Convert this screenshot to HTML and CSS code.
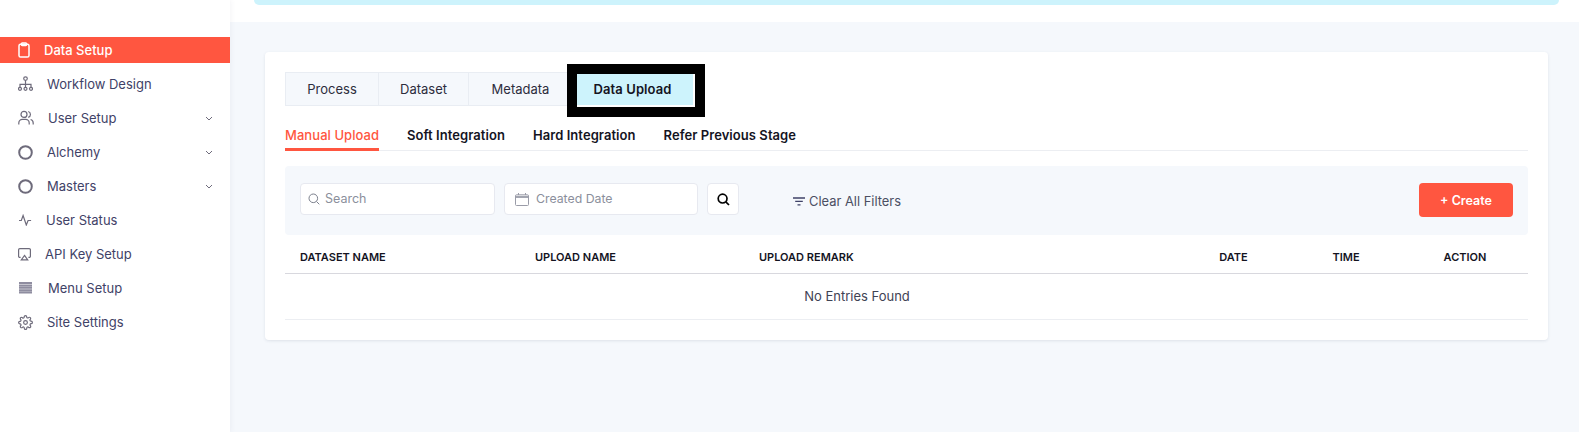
FILE: index.html
```html
<!DOCTYPE html>
<html>
<head>
  <title>Data Setup</title>
  <link rel="stylesheet" href="styles.css">
</head>
<body>
  <div class="app">
    <aside class="sidebar">
      <nav class="menu">
        <a class="menu-item active">
          <svg class="ico" width="12" height="16" viewBox="0 0 12 16"><rect x="1" y="2.2" width="10" height="12.8" rx="1.6"/><rect x="3.4" y="1" width="5.2" height="2.4" rx=".8"/></svg>
          <span>Data Setup</span>
        </a>
        <a class="menu-item">
          <svg class="ico" width="15" height="16" viewBox="0 0 15 16"><circle cx="7.5" cy="2.6" r="1.8"/><path d="M7.5 4.4V11M2 11V8.3h11V11"/><circle cx="2" cy="12.8" r="1.5"/><circle cx="7.5" cy="12.8" r="1.5"/><circle cx="13" cy="12.8" r="1.5"/></svg>
          <span>Workflow Design</span>
        </a>
        <a class="menu-item">
          <svg class="ico" width="16" height="16" viewBox="0 0 16 16"><circle cx="6" cy="4.4" r="3"/><path d="M.8 14.5v-1.6a3.6 3.6 0 0 1 3.6-3.6h3.2a3.6 3.6 0 0 1 3.6 3.6v1.6M10.2 1.5a3 3 0 0 1 0 5.8M12.6 9.5a3.5 3.5 0 0 1 2.6 3.4v1.6"/></svg>
          <span>User Setup</span>
          <svg class="chev" width="8" height="5" viewBox="0 0 8 5"><path d="M1 1l3 3 3-3"/></svg>
        </a>
        <a class="menu-item">
          <svg class="ico ring" width="15" height="15" viewBox="0 0 15 15"><circle cx="7.5" cy="7.5" r="6.3"/></svg>
          <span>Alchemy</span>
          <svg class="chev" width="8" height="5" viewBox="0 0 8 5"><path d="M1 1l3 3 3-3"/></svg>
        </a>
        <a class="menu-item">
          <svg class="ico ring" width="15" height="15" viewBox="0 0 15 15"><circle cx="7.5" cy="7.5" r="6.3"/></svg>
          <span>Masters</span>
          <svg class="chev" width="8" height="5" viewBox="0 0 8 5"><path d="M1 1l3 3 3-3"/></svg>
        </a>
        <a class="menu-item">
          <svg class="ico" width="14" height="12" viewBox="0 0 14 12"><path d="M1 6.5h2.3l1.8-5 3.2 9.5 1.8-4.5h3"/></svg>
          <span>User Status</span>
        </a>
        <a class="menu-item">
          <svg class="ico" width="13" height="13" viewBox="0 0 13 13"><path d="M2.6 9.4H1.8A1.2 1.2 0 0 1 .6 8.2V1.8A1.2 1.2 0 0 1 1.8.6h9.4a1.2 1.2 0 0 1 1.2 1.2v6.4a1.2 1.2 0 0 1-1.2 1.2h-.8M6.5 7.4l3.2 4.4H3.3z"/></svg>
          <span>API Key Setup</span>
        </a>
        <a class="menu-item">
          <svg class="ico bars" width="13" height="12" viewBox="0 0 13 12"><path d="M0 1h13M0 3.4h13M0 5.8h13M0 8.2h13M0 10.6h13"/></svg>
          <span>Menu Setup</span>
        </a>
        <a class="menu-item">
          <svg class="ico gear" width="15" height="15" viewBox="0 0 24 24"><circle cx="12" cy="12" r="3"/><path d="M19.4 15a1.65 1.65 0 0 0 .33 1.82l.06.06a2 2 0 1 1-2.83 2.83l-.06-.06a1.65 1.65 0 0 0-2.82 1.17V21a2 2 0 1 1-4 0v-.09A1.65 1.65 0 0 0 7.2 19.7l-.06.06a2 2 0 1 1-2.83-2.83l.06-.06a1.65 1.65 0 0 0-1.17-2.82H3a2 2 0 1 1 0-4h.09A1.65 1.65 0 0 0 4.3 7.2l-.06-.06a2 2 0 1 1 2.83-2.83l.06.06a1.65 1.65 0 0 0 2.82-1.17V3a2 2 0 1 1 4 0v.09a1.65 1.65 0 0 0 2.82 1.17l.06-.06a2 2 0 1 1 2.83 2.83l-.06.06a1.65 1.65 0 0 0 1.17 2.82H21a2 2 0 1 1 0 4h-.09a1.65 1.65 0 0 0-1.51 1z"/></svg>
          <span>Site Settings</span>
        </a>
      </nav>
    </aside>

    <main class="main">
      <div class="topbar"><div class="banner"></div></div>

      <div class="content">
        <section class="card">
          <div class="tabs">
            <div class="tab">Process</div>
            <div class="tab">Dataset</div>
            <div class="tab">Metadata</div>
            <div class="tab current">Data Upload</div>
          </div>

          <div class="subtabs">
            <a class="subtab active">Manual Upload</a>
            <a class="subtab">Soft Integration</a>
            <a class="subtab">Hard Integration</a>
            <a class="subtab">Refer Previous Stage</a>
          </div>

          <div class="filters">
            <div class="field search-field">
              <svg class="field-ico" width="12" height="12" viewBox="0 0 12 12"><circle cx="5.3" cy="5.3" r="4.3"/><path d="M8.5 8.5l2.8 2.8"/></svg>
              <span>Search</span>
            </div>
            <div class="field date-field">
              <svg class="field-cal" width="14" height="13" viewBox="0 0 14 13"><rect x=".5" y="1.8" width="13" height="10.7" rx="1"/><path d="M.5 3.4h13M.5 4.4h13"/><path d="M3.5 0v2M10.5 0v2"/></svg>
              <span>Created Date</span>
            </div>
            <button class="search-btn">
              <svg width="13" height="13" viewBox="0 0 13 13"><circle cx="5.6" cy="5.6" r="4.4"/><path d="M8.8 8.8l3.2 3.2"/></svg>
            </button>
            <a class="clear">
              <svg width="12" height="9" viewBox="0 0 12 9"><path d="M0 1h12M2.2 4.4h7.6M4.5 7.8h3"/></svg>
              Clear All Filters
            </a>
            <button class="create">+ Create</button>
          </div>

          <table class="grid">
            <thead>
              <tr>
                <th class="col-name">DATASET NAME</th>
                <th class="col-upload">UPLOAD NAME</th>
                <th class="col-remark">UPLOAD REMARK</th>
                <th class="col-date mid">DATE</th>
                <th class="col-time mid">TIME</th>
                <th class="col-action mid">ACTION</th>
              </tr>
            </thead>
            <tbody>
              <tr><td class="empty" colspan="6">No Entries Found</td></tr>
            </tbody>
          </table>
        </section>
      </div>
    </main>
  </div>
</body>
</html>
```

FILE: styles.css
```css
* { box-sizing: border-box; }
html, body { height: 100%; }
body { margin: 0; overflow: hidden; font-family: Inter, "Liberation Sans", sans-serif; font-size: 13px; color: #3f4254; background: #f5f8fc; }
svg { display: block; fill: none; flex: none; }

.app { display: flex; height: 432px; }

/* sidebar */
.sidebar { width: 230px; flex: none; background: #fff; padding-top: 37px; box-shadow: 0 0 6px rgba(60, 70, 100, 0.08); position: relative; }
.menu { display: flex; flex-direction: column; gap: 8px; }
.menu-item { display: flex; align-items: center; gap: 14px; height: 26px; padding: 0 17px 0 18px; color: #3f4267; }
.menu-item span { flex: 1; }
.menu-item.active { background: #ff5640; color: #fff; font-weight: 500; }
.ico { stroke: #6e6b7b; stroke-width: 1.2; }
.active .ico { stroke: #fff; stroke-width: 1.5; }
.ring { stroke-width: 2; }
.bars { margin: 0 2px 0 1px; stroke: #8f8da0; stroke-width: 2; }
.gear { stroke-width: 1.9; }
.chev { stroke: #6e6b7b; stroke-width: 1; }

/* top */
.main { flex: 1; min-width: 0; display: flex; flex-direction: column; }
.topbar { height: 22px; flex: none; background: #fff; padding: 0 20px 0 24px; }
.banner { height: 5px; background: #cdf3fc; border-radius: 0 0 8px 8px; }
.content { flex: 1; padding: 30px 31px 0 35px; }

/* card */
.card { height: 288px; background: #fff; border-radius: 4px; padding: 20px 20px 0; box-shadow: 0 1px 3px rgba(60, 70, 100, 0.12); }

.tabs { display: flex; height: 34px; }
.tab { display: flex; align-items: center; justify-content: center; background: #f5f8fc; border: 1px solid #e9edf3; border-left-width: 0; color: #2d2d3c; }
.tab:nth-child(1) { width: 94px; border-left-width: 1px; }
.tab:nth-child(2) { width: 90px; }
.tab:nth-child(3) { width: 98px; padding-left: 5px; border-right: 0; }
.tab.current { width: 118px; height: 33px; margin: 2px 0 0 10px; padding: 0 5px 2px 0; background: #cdf3fc; border: 0; border-right: 2px solid #fff; border-bottom: 2px solid #fff; font-weight: 600; letter-spacing: 0.1px; color: #14141f; outline: 10px solid #000; }

.subtabs { display: flex; gap: 28px; height: 45px; border-bottom: 1px solid #eceef2; }
.subtab { height: 45px; padding-top: 21px; color: #14141f; font-weight: 600; letter-spacing: 0.06px; }
.subtab.active { width: 94px; color: #ff5640; font-weight: 500; white-space: nowrap; border-bottom: 3px solid #ff5640; }

.filters { display: flex; align-items: flex-start; height: 69px; margin-top: 15px; padding: 17px 15px; background: #f5f8fc; border-radius: 4px; }
.field { display: flex; align-items: center; height: 32px; background: #fff; border: 1px solid #e7e9f0; border-radius: 4px; color: #8b8f9c; font-size: 12.5px; }
.search-field { width: 195px; padding-left: 7px; gap: 5px; }
.date-field { width: 194px; margin-left: 9px; padding-left: 10px; gap: 7px; }
.field span { padding-bottom: 1px; }
.date-field span { font-size: 12.3px; }
.field-ico { stroke: #7b7f8c; stroke-width: 1; }
.field-cal { stroke: #9a9ca8; stroke-width: 1; }
.search-btn { width: 32px; height: 32px; margin-left: 9px; padding: 0 0 0 9px; background: #fff; border: 1px solid #e7e9f0; border-radius: 4px; }
.search-btn svg { stroke: #000; stroke-width: 1.7; }
.clear { display: flex; align-items: center; gap: 4px; margin-left: 54px; height: 36px; color: #4b4f63; font-size: 12.9px; }
.clear svg { stroke: #3f4267; stroke-width: 1.3; }
.create { width: 94px; height: 34px; margin-left: auto; border: 0; border-radius: 4px; background: #ff5640; color: #fff; font: 600 12.5px Inter, "Liberation Sans", sans-serif; }

.grid { width: 100%; border-collapse: collapse; table-layout: fixed; }
.grid th { height: 38px; padding: 6px 15px 0; font-size: 11px; font-weight: 600; text-align: left; color: #14141f; border-bottom: 1px solid #d8d8de; }
.grid th.mid { text-align: center; }
.col-name { width: 235px; }
.col-upload { width: 224px; }
.col-date { width: 113px; }
.col-time { width: 112px; }
.col-action { width: 126px; }
.empty { height: 46px; padding-right: 100px; text-align: center; border-bottom: 1px solid #eceef2; color: #3f4254; }
```
